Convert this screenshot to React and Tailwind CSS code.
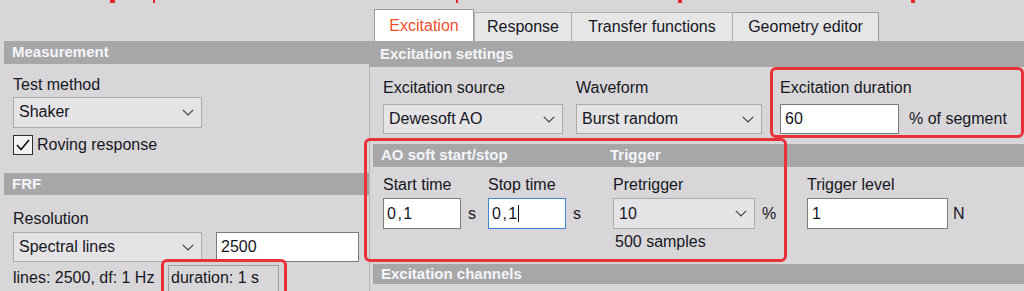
import React from "react";

function Chevron() {
  return (
    <svg width="12" height="7" viewBox="0 0 12 7" className="shrink-0">
      <polyline points="0.8,0.8 6,6 11.2,0.8" fill="none" stroke="#404040" strokeWidth="1.2" />
    </svg>
  );
}

function Select({ value, className }) {
  return (
    <div className={"bg-[#e4e3e5] border border-[#ababab] flex items-center justify-between pl-[5px] pr-[7px] " + className}>
      <span className="leading-[18px]">{value}</span>
      <Chevron />
    </div>
  );
}

function Input({ children, className }) {
  return (
    <div className={"bg-white border border-[#7c7c7c] flex items-center pl-[3px] " + className}>
      {children}
    </div>
  );
}

function Band({ children, className }) {
  return (
    <div className={"bg-[#a7a7a7] text-[#f3f5fb] font-bold text-[15px] flex items-center " + className}>
      {children}
    </div>
  );
}

function Label({ children, className = "" }) {
  return <div className={"leading-[18px] whitespace-nowrap " + className}>{children}</div>;
}

export default function App() {
  return (
    <div className="relative w-[1024px] h-[291px] overflow-hidden bg-[#d8d6d9] text-[16px] text-[#16161e] font-['Liberation_Sans',Arial,sans-serif]">
      {/* tabs */}
      <div className="h-[41px] flex items-end pl-[374px]">
        <div className="h-[32px] w-[100px] bg-white border border-b-0 border-[#9c9c9c] flex items-center justify-center text-[#ee4f2f] pt-[1px] relative z-10">
          Excitation
        </div>
        <div className="h-[29px] w-[98px] bg-[#e6e6e7] border border-b-0 border-[#b0b0b0] flex items-center justify-center">
          Response
        </div>
        <div className="h-[29px] w-[161px] bg-[#e6e6e7] border border-b-0 border-l-0 border-[#b0b0b0] flex items-center justify-center">
          Transfer functions
        </div>
        <div className="h-[29px] w-[146px] bg-[#e6e6e7] border border-b-0 border-l-0 border-[#9c9c9c] flex items-center justify-center">
          Geometry editor
        </div>
      </div>

      <div className="flex h-[250px]">
        {/* left panel */}
        <div className="w-[365px] ml-[4px] flex flex-col">
          <Band className="h-[26px] pl-[8px]">Measurement</Band>
          <div className="pl-[9px]">
            <Label className="mt-[12px]">Test method</Label>
            <Select value="Shaker" className="mt-[3px] w-[189px] h-[31px]" />
            <div className="mt-[7px] flex items-center h-[20px]">
              <div className="w-[20px] h-[20px] border border-[#2e2e2e] bg-[#f2f2f2] flex items-center justify-center">
                <svg width="16" height="14" viewBox="0 0 16 14">
                  <polyline points="2,7 6,11.5 14,2" fill="none" stroke="#111" strokeWidth="1.6" />
                </svg>
              </div>
              <span className="ml-[4px] leading-[18px]">Roving response</span>
            </div>
          </div>
          <Band className="h-[27px] pl-[8px] mt-[18px]">FRF</Band>
          <div className="pl-[9px]">
            <Label className="mt-[15px]">Resolution</Label>
            <div className="mt-[4px] flex items-center">
              <Select value="Spectral lines" className="w-[189px] h-[30px]" />
              <Input className="ml-[14px] w-[143px] h-[30px]">
                <span className="pl-[1px]">2500</span>
              </Input>
            </div>
            <div className="mt-[3px] flex items-start">
              <span className="w-[155px] mt-[4px] leading-[18px] whitespace-nowrap">lines: 2500, df: 1 Hz</span>
              <div className="w-[111px] h-[32px] border border-[#9e9e9e] pl-[2px] pt-[3px] leading-[18px] whitespace-nowrap">
                duration: 1 s
              </div>
            </div>
          </div>
        </div>

        {/* right panel */}
        <div className="flex-1 flex flex-col">
          <Band className="h-[26px] pl-[11px]">Excitation settings</Band>
          <div className="flex-1 border-l border-[#b5b5b5] flex flex-col">
            {/* row A */}
            <div className="flex pl-[13px] pt-[12px]">
              <div className="w-[193px] flex flex-col">
                <Label>Excitation source</Label>
                <Select value="Dewesoft AO" className="mt-[7px] w-[180px] h-[30px]" />
              </div>
              <div className="w-[204px] flex flex-col">
                <Label>Waveform</Label>
                <Select value="Burst random" className="mt-[7px] w-[186px] h-[30px]" />
              </div>
              <div className="flex flex-col">
                <Label>Excitation duration</Label>
                <div className="mt-[7px] flex items-center">
                  <Input className="w-[119px] h-[30px]">
                    <span className="pl-[1px]">60</span>
                  </Input>
                  <span className="ml-[10px] whitespace-nowrap">% of segment</span>
                </div>
              </div>
            </div>

            {/* band AO / Trigger */}
            <Band className="mt-[10px] ml-[3px] h-[23px] pl-[8px]">
              <span className="w-[229px]">AO soft start/stop</span>
              <span>Trigger</span>
            </Band>

            {/* row B */}
            <div className="flex pl-[13px] pt-[9px]">
              <div className="w-[105px] flex flex-col">
                <Label>Start time</Label>
                <div className="mt-[4px] flex items-center">
                  <Input className="w-[78px] h-[31px]">
                    <span className="tracking-[1.5px]">0,1</span>
                  </Input>
                  <span className="ml-[7px]">s</span>
                </div>
              </div>
              <div className="w-[125px] flex flex-col">
                <Label>Stop time</Label>
                <div className="mt-[4px] flex items-center">
                  <div className="w-[78px] h-[31px] bg-white border border-[#3f86d9] flex items-center pl-[3px]">
                    <span className="tracking-[1.5px]">0,1</span>
                    <span className="w-[1px] h-[17px] bg-[#111] -ml-[1px]" />
                  </div>
                  <span className="ml-[7px]">s</span>
                </div>
              </div>
              <div className="w-[194px] flex flex-col">
                <Label>Pretrigger</Label>
                <div className="mt-[4px] flex items-center">
                  <Select value="10" className="w-[142px] h-[31px]" />
                  <span className="ml-[7px]">%</span>
                </div>
                <Label className="mt-[4px] pl-[2px]">500 samples</Label>
              </div>
              <div className="flex flex-col">
                <Label>Trigger level</Label>
                <div className="mt-[4px] flex items-center">
                  <Input className="w-[141px] h-[31px]">
                    <span className="pl-[1px]">1</span>
                  </Input>
                  <span className="ml-[5px]">N</span>
                </div>
              </div>
            </div>

            <Band className="mt-[13px] ml-[3px] h-[20px] pl-[8px]">Excitation channels</Band>
          </div>
        </div>
      </div>

      {/* red annotation marks (overlay) */}
      <div className="absolute left-[110px] top-0 w-[5px] h-[3px] bg-[#e8242c]" />
      <div className="absolute left-[153px] top-0 w-[2px] h-[3px] bg-[#e8242c]" />
      <div className="absolute left-[456px] top-0 w-[2px] h-[3px] bg-[#e8242c]" />
      <div className="absolute left-[678px] top-0 w-[4px] h-[3px] bg-[#e8242c]" />
      <div className="absolute left-[911px] top-0 w-[4px] h-[3px] bg-[#e8242c]" />

      <div className="absolute left-[770px] top-[67px] w-[254px] h-[71px] border-[3px] border-[#e8323a] rounded-[6px]" />
      <div className="absolute left-[364px] top-[138px] w-[423px] h-[124px] border-[3px] border-[#e8323a] rounded-[6px]" />
      <div className="absolute left-[161px] top-[259px] w-[126px] h-[40px] border-[3px] border-[#e8323a] rounded-[6px]" />
    </div>
  );
}
